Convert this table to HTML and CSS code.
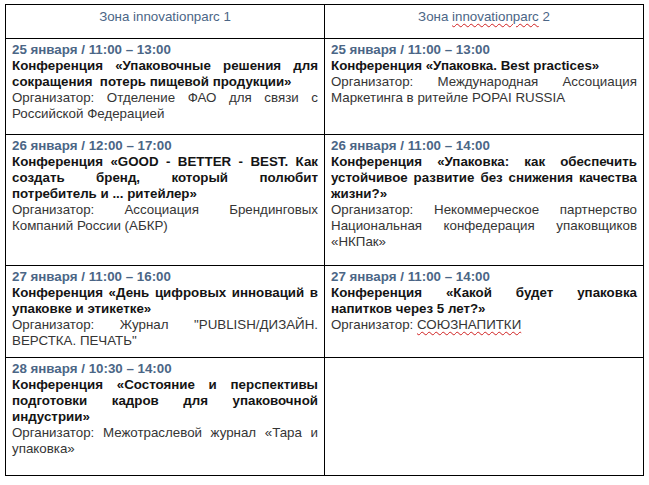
FILE: index.html
```html
<!DOCTYPE html>
<html lang="ru">
<head>
<meta charset="utf-8">
<link rel="stylesheet" href="styles.css">
</head>
<body>
<div class="page">
<table class="sched">
  <colgroup><col class="col"><col class="col"></colgroup>
  <tr class="head">
    <th>Зона innovationparc 1</th>
    <th>Зона <span class="spell">innovationparc</span> 2</th>
  </tr>
  <tr class="r1">
    <td>
      <p class="date">25 января / 11:00 – 13:00</p>
      <p class="title">Конференция «Упаковочные решения для сокращения&nbsp; потерь пищевой продукции»</p>
      <p class="org">Организатор: Отделение ФАО для связи с Российской Федерацией</p>
    </td>
    <td>
      <p class="date">25 января / 11:00 – 13:00</p>
      <p class="title">Конференция «Упаковка. Best practices»</p>
      <p class="org">Организатор: Международная Ассоциация Маркетинга в ритейле POPAI RUSSIA</p>
    </td>
  </tr>
  <tr class="r2">
    <td>
      <p class="date">26 января / 12:00 – 17:00</p>
      <p class="title">Конференция «GOOD - BETTER - BEST. Как создать бренд, который полюбит потребитель и ... ритейлер»</p>
      <p class="org">Организатор: Ассоциация Брендинговых Компаний России (АБКР)</p>
    </td>
    <td>
      <p class="date">26 января / 11:00 – 14:00</p>
      <p class="title">Конференция «Упаковка: как обеспечить устойчивое развитие без снижения качества жизни?»</p>
      <p class="org">Организатор: Некоммерческое партнерство Национальная конфедерация упаковщиков «НКПак»</p>
    </td>
  </tr>
  <tr class="r3">
    <td>
      <p class="date">27 января / 11:00 – 16:00</p>
      <p class="title">Конференция «День цифровых инноваций в упаковке и этикетке»</p>
      <p class="org">Организатор: Журнал "PUBLISH/ДИЗАЙН. ВЕРСТКА. ПЕЧАТЬ"</p>
    </td>
    <td>
      <p class="date">27 января / 11:00 – 14:00</p>
      <p class="title">Конференция «Какой будет упаковка напитков через 5 лет?»</p>
      <p class="org">Организатор: <span class="spell">СОЮЗНАПИТКИ</span></p>
    </td>
  </tr>
  <tr class="r4">
    <td>
      <p class="date">28 января / 10:30 – 14:00</p>
      <p class="title">Конференция «Состояние и перспективы подготовки кадров для упаковочной индустрии»</p>
      <p class="org">Организатор: Межотраслевой журнал «Тара и упаковка»</p>
    </td>
    <td></td>
  </tr>
</table>
</div>
</body>
</html>
```
FILE: styles.css
```css
html, body {
  margin: 0;
  padding: 0;
  background: #fff;
}
.page {
  padding: 4px 5px;
  font-family: "Liberation Sans", Arial, sans-serif;
  font-size: 13.33px;
  line-height: 16px;
}
.sched {
  border-collapse: collapse;
  width: 639px;
  table-layout: fixed;
}
.col {
  width: 50%;
}
.sched th,
.sched td {
  border: 1px solid #000;
  vertical-align: top;
  padding: 3px 6px 0 6px;
  text-align: justify;
}
.sched th {
  font-weight: normal;
  color: #4b6686;
  text-align: center;
  padding-top: 4px;
}
.head { height: 34px; }
.r1 { height: 96px; }
.r2 { height: 131px; }
.r3 { height: 92px; }
.r4 { height: 118px; }
.sched p {
  margin: 0;
}
.date {
  font-weight: bold;
  color: #4b6686;
}
.title {
  font-weight: bold;
  color: #141414;
}
.org {
  color: #353535;
}
.spell {
  text-decoration: underline wavy #d02020;
  text-decoration-thickness: 1px;
  text-underline-offset: 2px;
}
```
